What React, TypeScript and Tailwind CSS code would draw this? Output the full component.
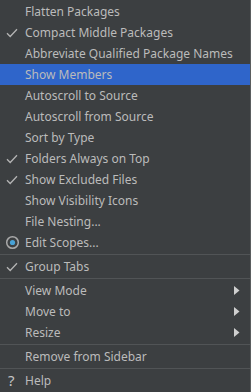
import React from 'react';

type Item =
  | { kind: 'item'; label: string; mark?: 'check' | 'radio' | 'help'; active?: boolean; sub?: boolean }
  | { kind: 'sep' };

const items: Item[] = [
  { kind: 'item', label: 'Flatten Packages' },
  { kind: 'item', label: 'Compact Middle Packages', mark: 'check' },
  { kind: 'item', label: 'Abbreviate Qualified Package Names' },
  { kind: 'item', label: 'Show Members', active: true },
  { kind: 'item', label: 'Autoscroll to Source' },
  { kind: 'item', label: 'Autoscroll from Source' },
  { kind: 'item', label: 'Sort by Type' },
  { kind: 'item', label: 'Folders Always on Top', mark: 'check' },
  { kind: 'item', label: 'Show Excluded Files', mark: 'check' },
  { kind: 'item', label: 'Show Visibility Icons' },
  { kind: 'item', label: 'File Nesting...' },
  { kind: 'item', label: 'Edit Scopes...', mark: 'radio' },
  { kind: 'sep' },
  { kind: 'item', label: 'Group Tabs', mark: 'check' },
  { kind: 'sep' },
  { kind: 'item', label: 'View Mode', sub: true },
  { kind: 'item', label: 'Move to', sub: true },
  { kind: 'item', label: 'Resize', sub: true },
  { kind: 'sep' },
  { kind: 'item', label: 'Remove from Sidebar' },
  { kind: 'sep' },
  { kind: 'item', label: 'Help', mark: 'help' },
];

function Mark({ mark }: { mark?: 'check' | 'radio' | 'help' }) {
  if (mark === 'check')
    return (
      <svg width="12" height="10" viewBox="0 0 12 10" className="ml-[6px]">
        <path d="M1 5.2 L4.2 8.5 L11 1.2" fill="none" stroke="#b4b4b4" strokeWidth="1.3" />
      </svg>
    );
  if (mark === 'radio')
    return (
      <svg width="15" height="15" viewBox="0 0 15 15" className="ml-[5px]">
        <circle cx="7.5" cy="7.5" r="5.8" fill="none" stroke="#a9a9a9" strokeWidth="1.5" />
        <circle cx="7.5" cy="7.5" r="2.6" fill="#48a2d6" />
      </svg>
    );
  if (mark === 'help')
    return <span className="ml-[8px] text-[15px] leading-none text-[#c4c4c4]">?</span>;
  return null;
}

export default function App() {
  return (
    <div
      className="w-[251px] h-[392px] bg-[#3c3f41] border-r border-[#5a5d5f] pt-px text-[12px] text-[#bbbbbb] overflow-hidden"
      style={{ fontFamily: '"Noto Sans", "Open Sans", sans-serif' }}
    >
      {items.map((it, i) =>
        it.kind === 'sep' ? (
          <div key={i} className="h-[3px] flex items-center">
            <div className="h-px w-full bg-[#515456]" />
          </div>
        ) : (
          <div
            key={i}
            className={`h-[21px] flex items-center ${it.active ? 'bg-[#2f65ca]' : ''}`}
          >
            <div className="w-[25px] flex items-center shrink-0">
              <Mark mark={it.mark} />
            </div>
            <span className="flex-1 whitespace-nowrap">{it.label}</span>
            {it.sub && (
              <svg width="6" height="9" viewBox="0 0 6 9" className="mr-[10px]">
                <path d="M0 0 L5.5 4.5 L0 9 Z" fill="#cfcfcf" />
              </svg>
            )}
          </div>
        )
      )}
    </div>
  );
}
